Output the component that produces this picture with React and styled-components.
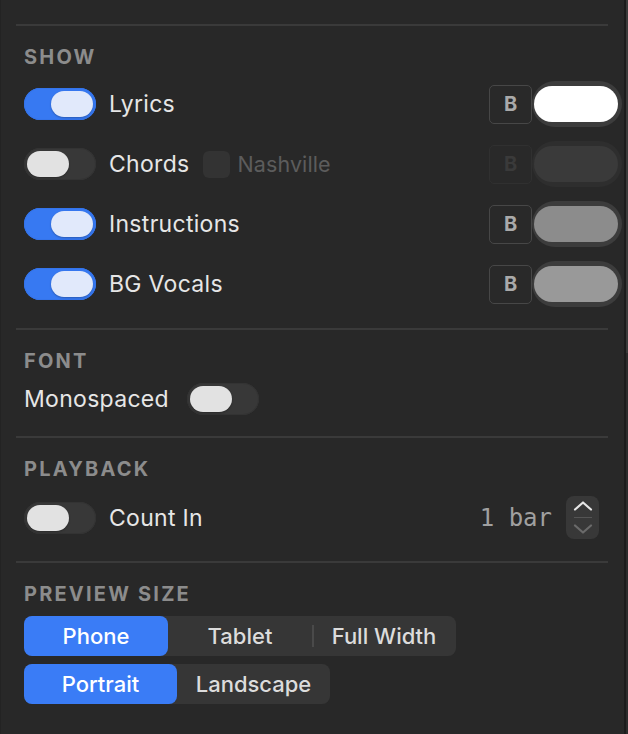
import React, { useState } from "react";
import styled, { createGlobalStyle } from "styled-components";

const GlobalStyle = createGlobalStyle`
  html, body {
    margin: 0;
    padding: 0;
    background: #282828;
  }
  body {
    font-family: Inter, "Noto Sans", "Liberation Sans", sans-serif;
    -webkit-font-smoothing: antialiased;
  }
`;

export default function App() {
  const [show, setShow] = useState({
    lyrics: true,
    chords: false,
    instructions: true,
    vocals: true,
  });
  const [mono, setMono] = useState(false);
  const [countIn, setCountIn] = useState(false);
  const [bars, setBars] = useState(1);
  const [size, setSize] = useState("Phone");
  const [orientation, setOrientation] = useState("Portrait");

  const flip = (key) => setShow((s) => ({ ...s, [key]: !s[key] }));

  return (
    <Frame>
      <GlobalStyle />
      <Panel>
        <Divider />
        <Section>
          <Heading>Show</Heading>
          <ShowList>
            {showRows.map((row) => (
              <Row key={row.key}>
                <Switch on={show[row.key]} onClick={() => flip(row.key)}>
                  <Knob on={show[row.key]} />
                </Switch>
                <Label>{row.label}</Label>
                {row.key === "chords" && (
                  <>
                    <Checkbox />
                    <MutedLabel>Nashville</MutedLabel>
                  </>
                )}
                <Spacer />
                <BoldButton disabled={row.disabled}>B</BoldButton>
                <ColorWell disabled={row.disabled}>
                  <Swatch color={row.color} />
                </ColorWell>
              </Row>
            ))}
          </ShowList>
        </Section>
        <Divider />
        <Section>
          <Heading>Font</Heading>
          <FontRow>
            <Label>Monospaced</Label>
            <Switch on={mono} onClick={() => setMono(!mono)}>
              <Knob on={mono} />
            </Switch>
          </FontRow>
        </Section>
        <Divider />
        <Section bottom={22}>
          <Heading>Playback</Heading>
          <PlaybackRow>
            <Switch on={countIn} onClick={() => setCountIn(!countIn)}>
              <Knob on={countIn} />
            </Switch>
            <Label>Count In</Label>
            <Spacer />
            <BarValue>
              {bars} bar{bars > 1 ? "s" : ""}
            </BarValue>
            <Stepper>
              <StepBtn onClick={() => setBars(bars + 1)}>
                <svg width="20" height="10" viewBox="0 0 20 10">
                  <path d="M2 8.5 L10 1.5 L18 8.5" fill="none" stroke="#e6e6e6" strokeWidth="2.2" strokeLinecap="round" strokeLinejoin="round" />
                </svg>
              </StepBtn>
              <StepLine />
              <StepBtn onClick={() => setBars(Math.max(1, bars - 1))}>
                <svg width="20" height="10" viewBox="0 0 20 10">
                  <path d="M2 1.5 L10 8.5 L18 1.5" fill="none" stroke="#6a6a6a" strokeWidth="2.2" strokeLinecap="round" strokeLinejoin="round" />
                </svg>
              </StepBtn>
            </Stepper>
          </PlaybackRow>
        </Section>
        <Divider />
        <Section bottom={0}>
          <Heading>Preview Size</Heading>
          <Segmented>
            {sizes.map((s, i) => (
              <Segment
                key={s}
                w={144}
                active={size === s}
                sep={i > 0 && size !== s && size !== sizes[i - 1]}
                onClick={() => setSize(s)}
              >
                {s}
              </Segment>
            ))}
          </Segmented>
          <Segmented>
            {orientations.map((o, i) => (
              <Segment
                key={o}
                w={153}
                active={orientation === o}
                sep={i > 0 && orientation !== o && orientation !== orientations[i - 1]}
                onClick={() => setOrientation(o)}
              >
                {o}
              </Segment>
            ))}
          </Segmented>
        </Section>
      </Panel>
      <ScrollTrack>
        <Thumb />
      </ScrollTrack>
    </Frame>
  );
}

const showRows = [
  { key: "lyrics", label: "Lyrics", color: "#ffffff" },
  { key: "chords", label: "Chords", color: "#3a3a3a", disabled: true },
  { key: "instructions", label: "Instructions", color: "#8c8c8c" },
  { key: "vocals", label: "BG Vocals", color: "#999999" },
];

const sizes = ["Phone", "Tablet", "Full Width"];
const orientations = ["Portrait", "Landscape"];

const Frame = styled.div`
  display: flex;
  width: 628px;
  height: 734px;
  overflow: hidden;
  background: #282828;
`;

const Panel = styled.div`
  flex: 1;
  padding: 24px 2px 0 24px;
  box-shadow: inset 1px 0 0 #232323;
  box-sizing: border-box;
`;

const ScrollTrack = styled.div`
  width: 2px;
  border-left: 2px solid #1c1c1c;
  background: #2c2c2c;
`;

const Thumb = styled.div`
  height: 353px;
  background: #3b3b3b;
`;

const Divider = styled.div`
  height: 2px;
  background: #3a3a3a;
  margin: 0 14px 0 -8px;
`;

const Section = styled.section`
  padding: 19px 0 ${(p) => (p.bottom ?? 21)}px;
`;

const Heading = styled.div`
  font-size: 20px;
  line-height: 24px;
  font-weight: 700;
  letter-spacing: 2.2px;
  text-transform: uppercase;
  color: #8c8c8c;
  margin-bottom: 10px;
`;

const ShowList = styled.div`
  display: flex;
  flex-direction: column;
  gap: 14px;
  padding-top: 2px;
`;

const Row = styled.div`
  display: flex;
  align-items: center;
  height: 46px;
`;

const FontRow = styled.div`
  display: flex;
  align-items: center;
  gap: 18px;
  height: 32px;
`;

const PlaybackRow = styled.div`
  display: flex;
  align-items: center;
  height: 43px;
  padding: 5px 23px 0 0;
`;

const Spacer = styled.div`
  flex: 1;
`;

const Switch = styled.div`
  position: relative;
  width: 72px;
  height: 32px;
  border-radius: 16px;
  flex-shrink: 0;
  background: ${(p) => (p.on ? "#3779f2" : "#383838")};
  box-shadow: inset 0 0 0 1px ${(p) => (p.on ? "#3474ea" : "#333")};
  cursor: pointer;
`;

const Knob = styled.div`
  position: absolute;
  top: 3px;
  left: ${(p) => (p.on ? "27px" : "3px")};
  width: 42px;
  height: 26px;
  border-radius: 13px;
  background: ${(p) => (p.on ? "#e1e9fb" : "#e2e2e2")};
  box-shadow: 0 1px 2px rgba(0, 0, 0, 0.25);
`;

const Label = styled.span`
  font-size: 23px;
  letter-spacing: 0.3px;
  color: #e6e6e6;
  margin-left: 13px;
  white-space: nowrap;
  ${FontRow} & {
    margin-left: 0;
  }
`;

const MutedLabel = styled.span`
  font-size: 21.5px;
  letter-spacing: 0.1px;
  color: #5c5c5c;
  margin-left: 8px;
`;

const Checkbox = styled.div`
  width: 27px;
  height: 27px;
  border-radius: 6px;
  background: #333333;
  margin-left: 13px;
`;

const BoldButton = styled.div`
  width: 43px;
  height: 39px;
  box-sizing: border-box;
  border: 1.5px solid ${(p) => (p.disabled ? "#303030" : "#474747")};
  border-radius: 5px;
  display: flex;
  align-items: center;
  justify-content: center;
  font-size: 20px;
  font-weight: 700;
  color: ${(p) => (p.disabled ? "#3a3a3a" : "#a9a9a9")};
  background: #292929;
`;

const ColorWell = styled.div`
  width: 90px;
  height: 46px;
  box-sizing: border-box;
  padding: 5px 4px 5px 2px;
  border-radius: 23px;
  background: ${(p) => (p.disabled ? "#2e2e2e" : "#3c3c3c")};
`;

const Swatch = styled.div`
  width: 100%;
  height: 100%;
  border-radius: 18px;
  background: ${(p) => p.color};
`;

const BarValue = styled.span`
  font-family: "DejaVu Sans Mono", "Liberation Mono", monospace;
  font-size: 24px;
  color: #a0a0a0;
  margin-right: 14px;
`;

const Stepper = styled.div`
  width: 33px;
  height: 43px;
  border-radius: 8px;
  background: #383838;
  display: flex;
  flex-direction: column;
  align-items: center;
`;

const StepBtn = styled.div`
  flex: 1;
  display: flex;
  align-items: center;
  justify-content: center;
  cursor: pointer;
`;

const StepLine = styled.div`
  width: 18px;
  height: 1.5px;
  background: #555;
`;

const Segmented = styled.div`
  display: flex;
  width: fit-content;
  border-radius: 8px;
  background: #363636;
  margin-bottom: 8px;
`;

const Segment = styled.div`
  position: relative;
  width: ${(p) => p.w}px;
  height: 40px;
  display: flex;
  align-items: center;
  justify-content: center;
  border-radius: 8px;
  font-size: 22px;
  font-weight: 500;
  color: ${(p) => (p.active ? "#ffffff" : "#dcdcdc")};
  background: ${(p) => (p.active ? "#3a7cf6" : "transparent")};
  cursor: pointer;
  &::before {
    content: "";
    display: ${(p) => (p.sep ? "block" : "none")};
    position: absolute;
    left: 0;
    top: 9px;
    bottom: 9px;
    width: 2px;
    background: #4a4a4a;
  }
`;
